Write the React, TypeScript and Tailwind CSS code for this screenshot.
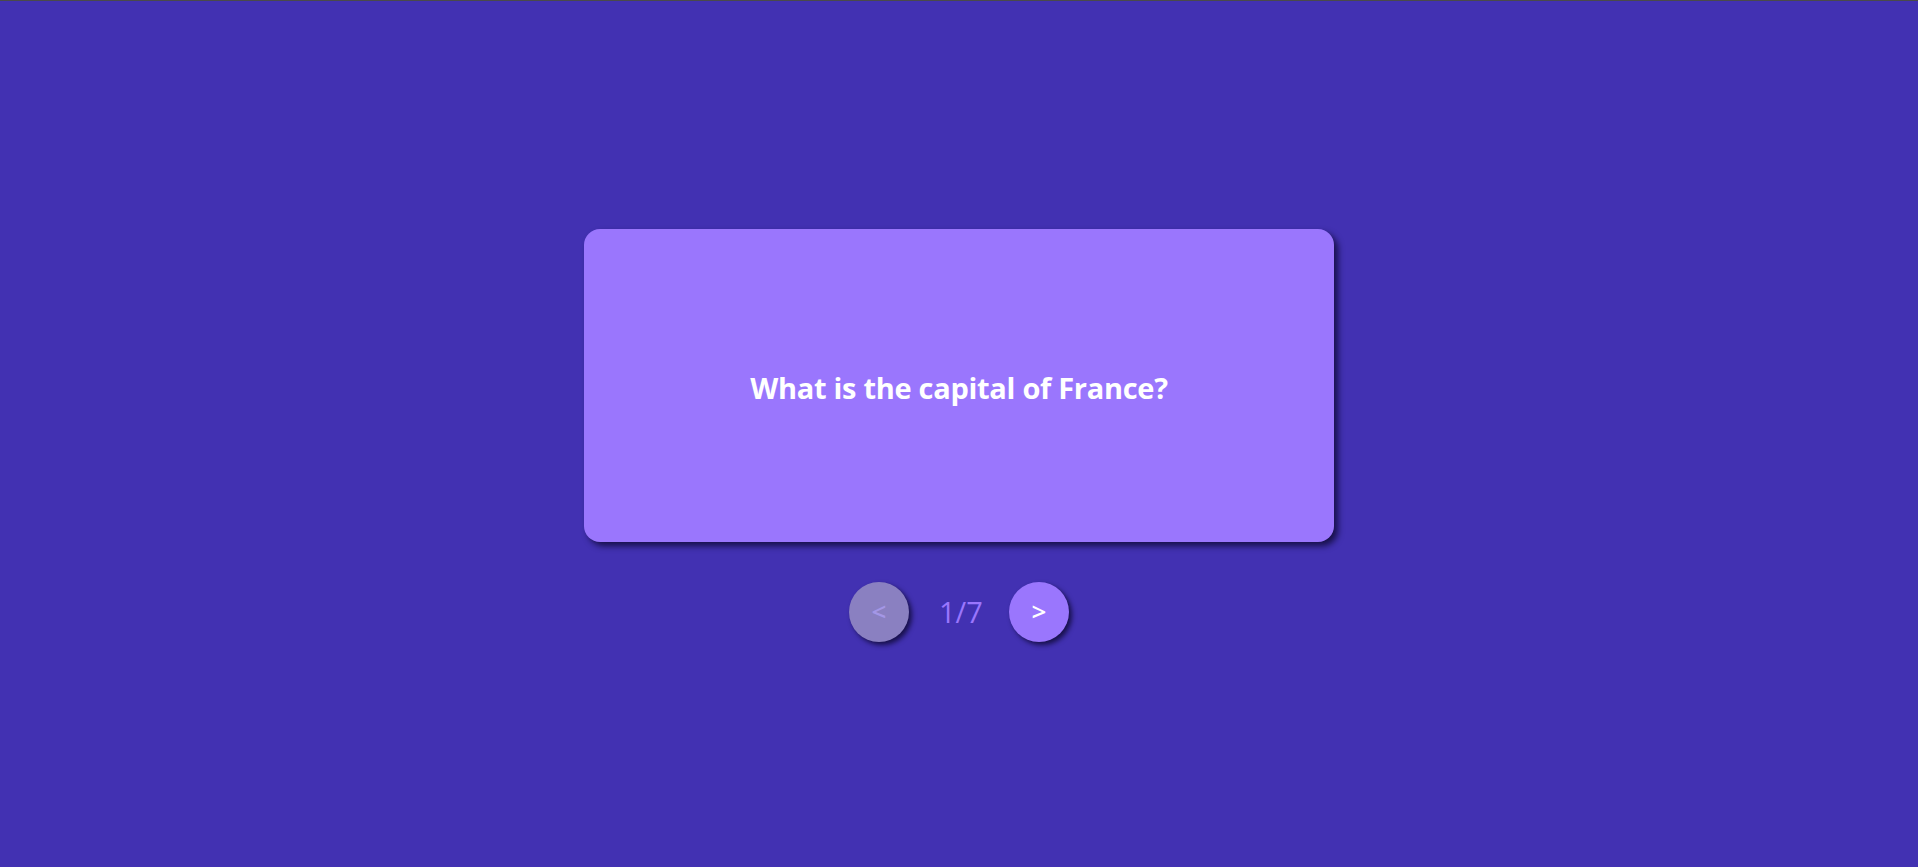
import React, { useState } from "react";

const cards = [
  { q: "What is the capital of France?", a: "Paris" },
  { q: "What is 2 + 2?", a: "4" },
  { q: "Who wrote Hamlet?", a: "William Shakespeare" },
  { q: "What is the largest planet?", a: "Jupiter" },
  { q: "What is H2O?", a: "Water" },
  { q: "How many continents are there?", a: "7" },
  { q: "What is the speed of light?", a: "299,792 km/s" },
];

export default function App() {
  const [index, setIndex] = useState(0);
  const [flipped, setFlipped] = useState(false);
  const card = cards[index];

  return (
    <div className="min-h-screen bg-[#4231b2] border-t border-[#4a4a4a] pt-[2px] flex flex-col items-center justify-center font-['Open_Sans',sans-serif]">
      <div
        onClick={() => setFlipped(!flipped)}
        className="w-[750px] h-[313px] pt-[6px] rounded-2xl bg-[#9a76fd] shadow-[4px_4px_6px_rgba(10,5,40,0.75)] flex items-center justify-center cursor-pointer"
      >
        <span className="text-white text-[29px] font-bold tracking-[-0.01em]">
          {flipped ? card.a : card.q}
        </span>
      </div>

      <div className="mt-10 flex items-center gap-[30px]">
        <button
          disabled={index === 0}
          onClick={() => {
            setIndex(index - 1);
            setFlipped(false);
          }}
          className={`w-[60px] h-[60px] rounded-full text-[26px] font-semibold flex items-center justify-center shadow-[3px_3px_5px_rgba(10,5,40,0.75)] ${
            index === 0 ? "bg-[#8a80c1] text-[#a497e6]" : "bg-[#9a76fd] text-white"
          }`}
        >
          &lt;
        </button>
        <span className="text-[#9a76fd] text-[29px] font-medium w-[40px] text-center leading-none">
          {index + 1}/{cards.length}
        </span>
        <button
          disabled={index === cards.length - 1}
          onClick={() => {
            setIndex(index + 1);
            setFlipped(false);
          }}
          className={`w-[60px] h-[60px] rounded-full text-[26px] font-semibold flex items-center justify-center shadow-[3px_3px_5px_rgba(10,5,40,0.75)] ${
            index === cards.length - 1 ? "bg-[#8a80c1] text-[#a497e6]" : "bg-[#9a76fd] text-white"
          }`}
        >
          &gt;
        </button>
      </div>
    </div>
  );
}
